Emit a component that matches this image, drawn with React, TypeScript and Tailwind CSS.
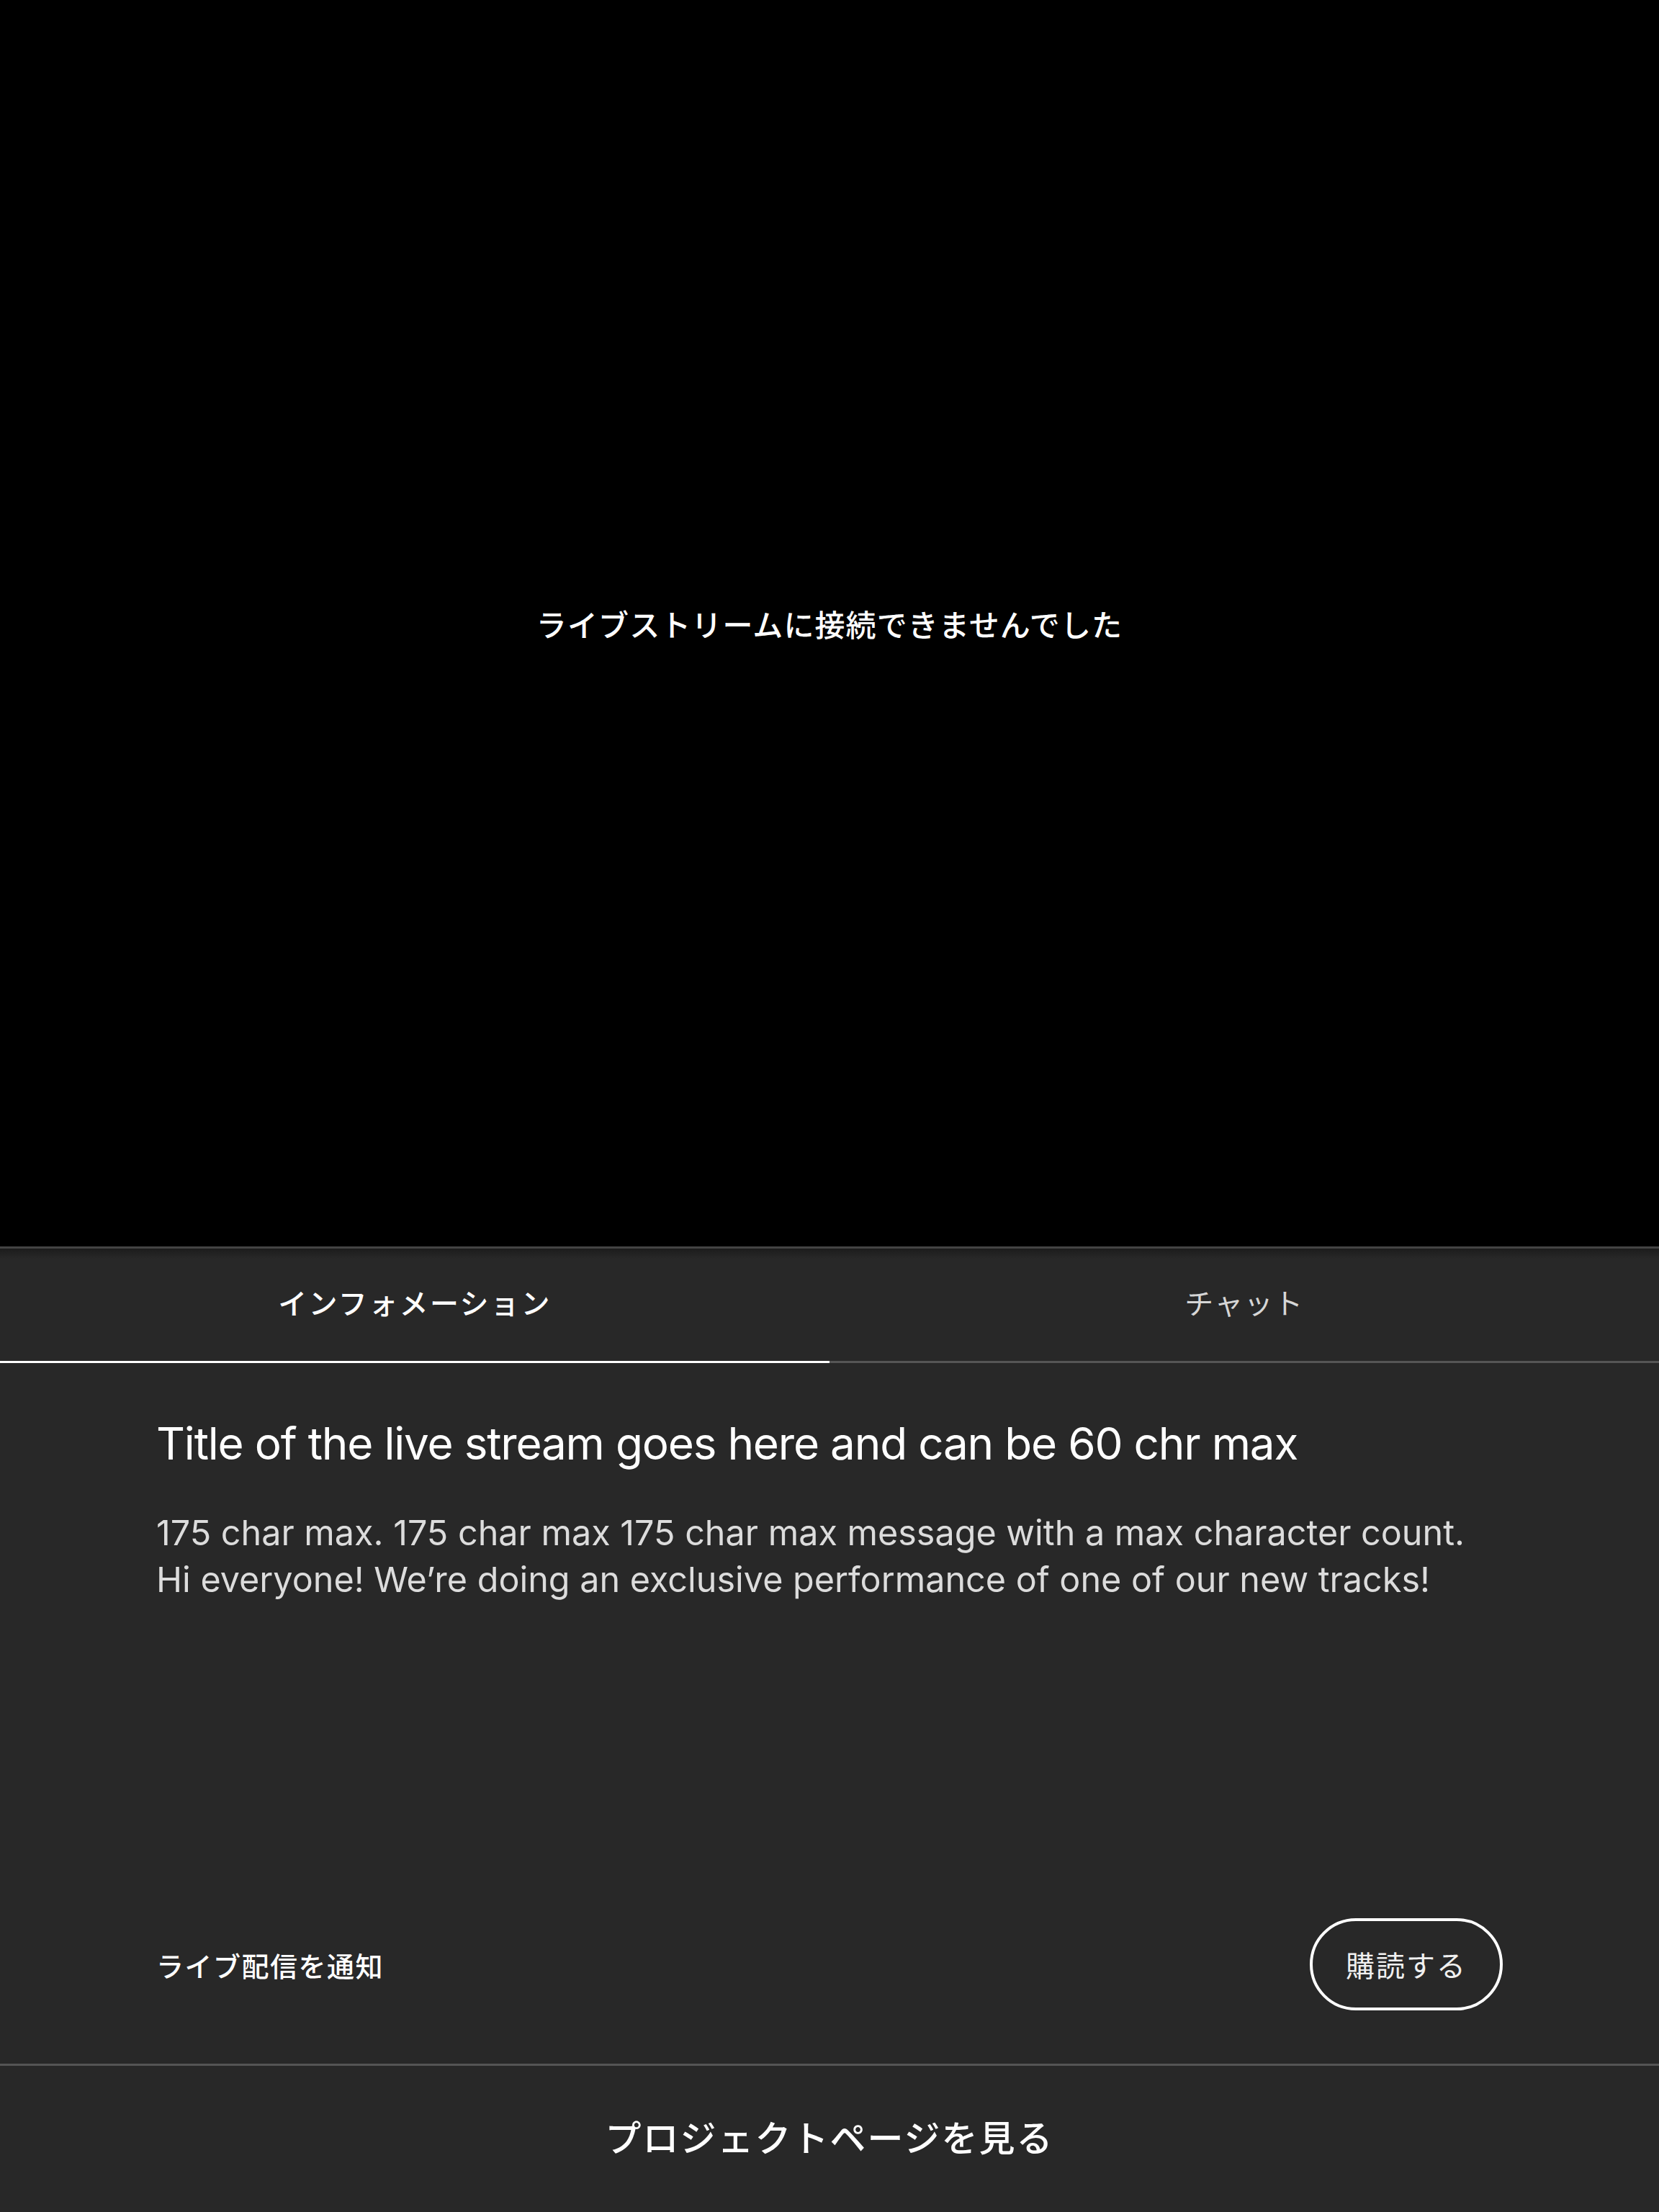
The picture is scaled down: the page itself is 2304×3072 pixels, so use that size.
import React from "react";

const jp = { fontFamily: '"Noto Sans CJK JP", "Noto Sans", sans-serif' };
const en = { fontFamily: 'Inter, "Noto Sans CJK JP", sans-serif' };

export default function App() {
  return (
    <div className="w-[2304px] h-[3072px] flex flex-col bg-[#282828] overflow-hidden">
      <div className="h-[1731px] bg-black flex items-center justify-center">
        <span className="text-[42px] text-white font-medium tracking-[1.1px]" style={jp}>
          ライブストリームに接続できませんでした
        </span>
      </div>
      <div className="h-[3px] bg-[#444444]" />
      <div className="relative h-[156px] flex">
        <div className="absolute left-0 right-0 top-0 h-[14px] bg-gradient-to-b from-[#1c1c1c] to-[#282828]" />
        <div className="relative flex-1 flex items-center justify-center pb-[8px]">
          <span className="text-[40px] text-white font-medium tracking-[2.4px]" style={jp}>インフォメーション</span>
        </div>
        <div className="relative flex-1 flex items-center justify-center pb-[8px]">
          <span className="text-[40px] text-[#d6d6d6] tracking-[1.5px]" style={jp}>チャット</span>
        </div>
      </div>
      <div className="h-[3px] flex">
        <div className="flex-1 bg-white" />
        <div className="flex-1 bg-[#555555]" />
      </div>
      <div className="h-[973px] flex flex-col px-[217px]">
        <h1 className="mt-[73px] text-[62px] leading-[77px] text-white font-normal tracking-[-1.2px]" style={en}>
          Title of the live stream goes here and can be 60 chr max
        </h1>
        <p className="mt-[53px] text-[48.5px] leading-[65px] text-[#dcdcdc]" style={en}>
          175 char max. 175 char max 175 char max message with a max character count.
          <br />
          Hi everyone! We’re doing an exclusive performance of one of our new tracks!
        </p>
        <div className="flex-1" />
        <div className="flex items-center justify-between mb-[74px]">
          <span className="text-[38px] text-white font-medium tracking-[1.5px]" style={jp}>ライブ配信を通知</span>
          <button className="h-[128px] w-[268px] rounded-full border-[4px] border-white flex items-center justify-center">
            <span className="text-[40px] text-[#f0f0f0] tracking-[2px]" style={jp}>購読する</span>
          </button>
        </div>
      </div>
      <div className="h-[3px] bg-[#555555]" />
      <div className="flex-1 flex items-center justify-center pb-[8px]">
        <span className="text-[50px] text-white font-medium tracking-[2px]" style={jp}>プロジェクトページを見る</span>
      </div>
    </div>
  );
}
